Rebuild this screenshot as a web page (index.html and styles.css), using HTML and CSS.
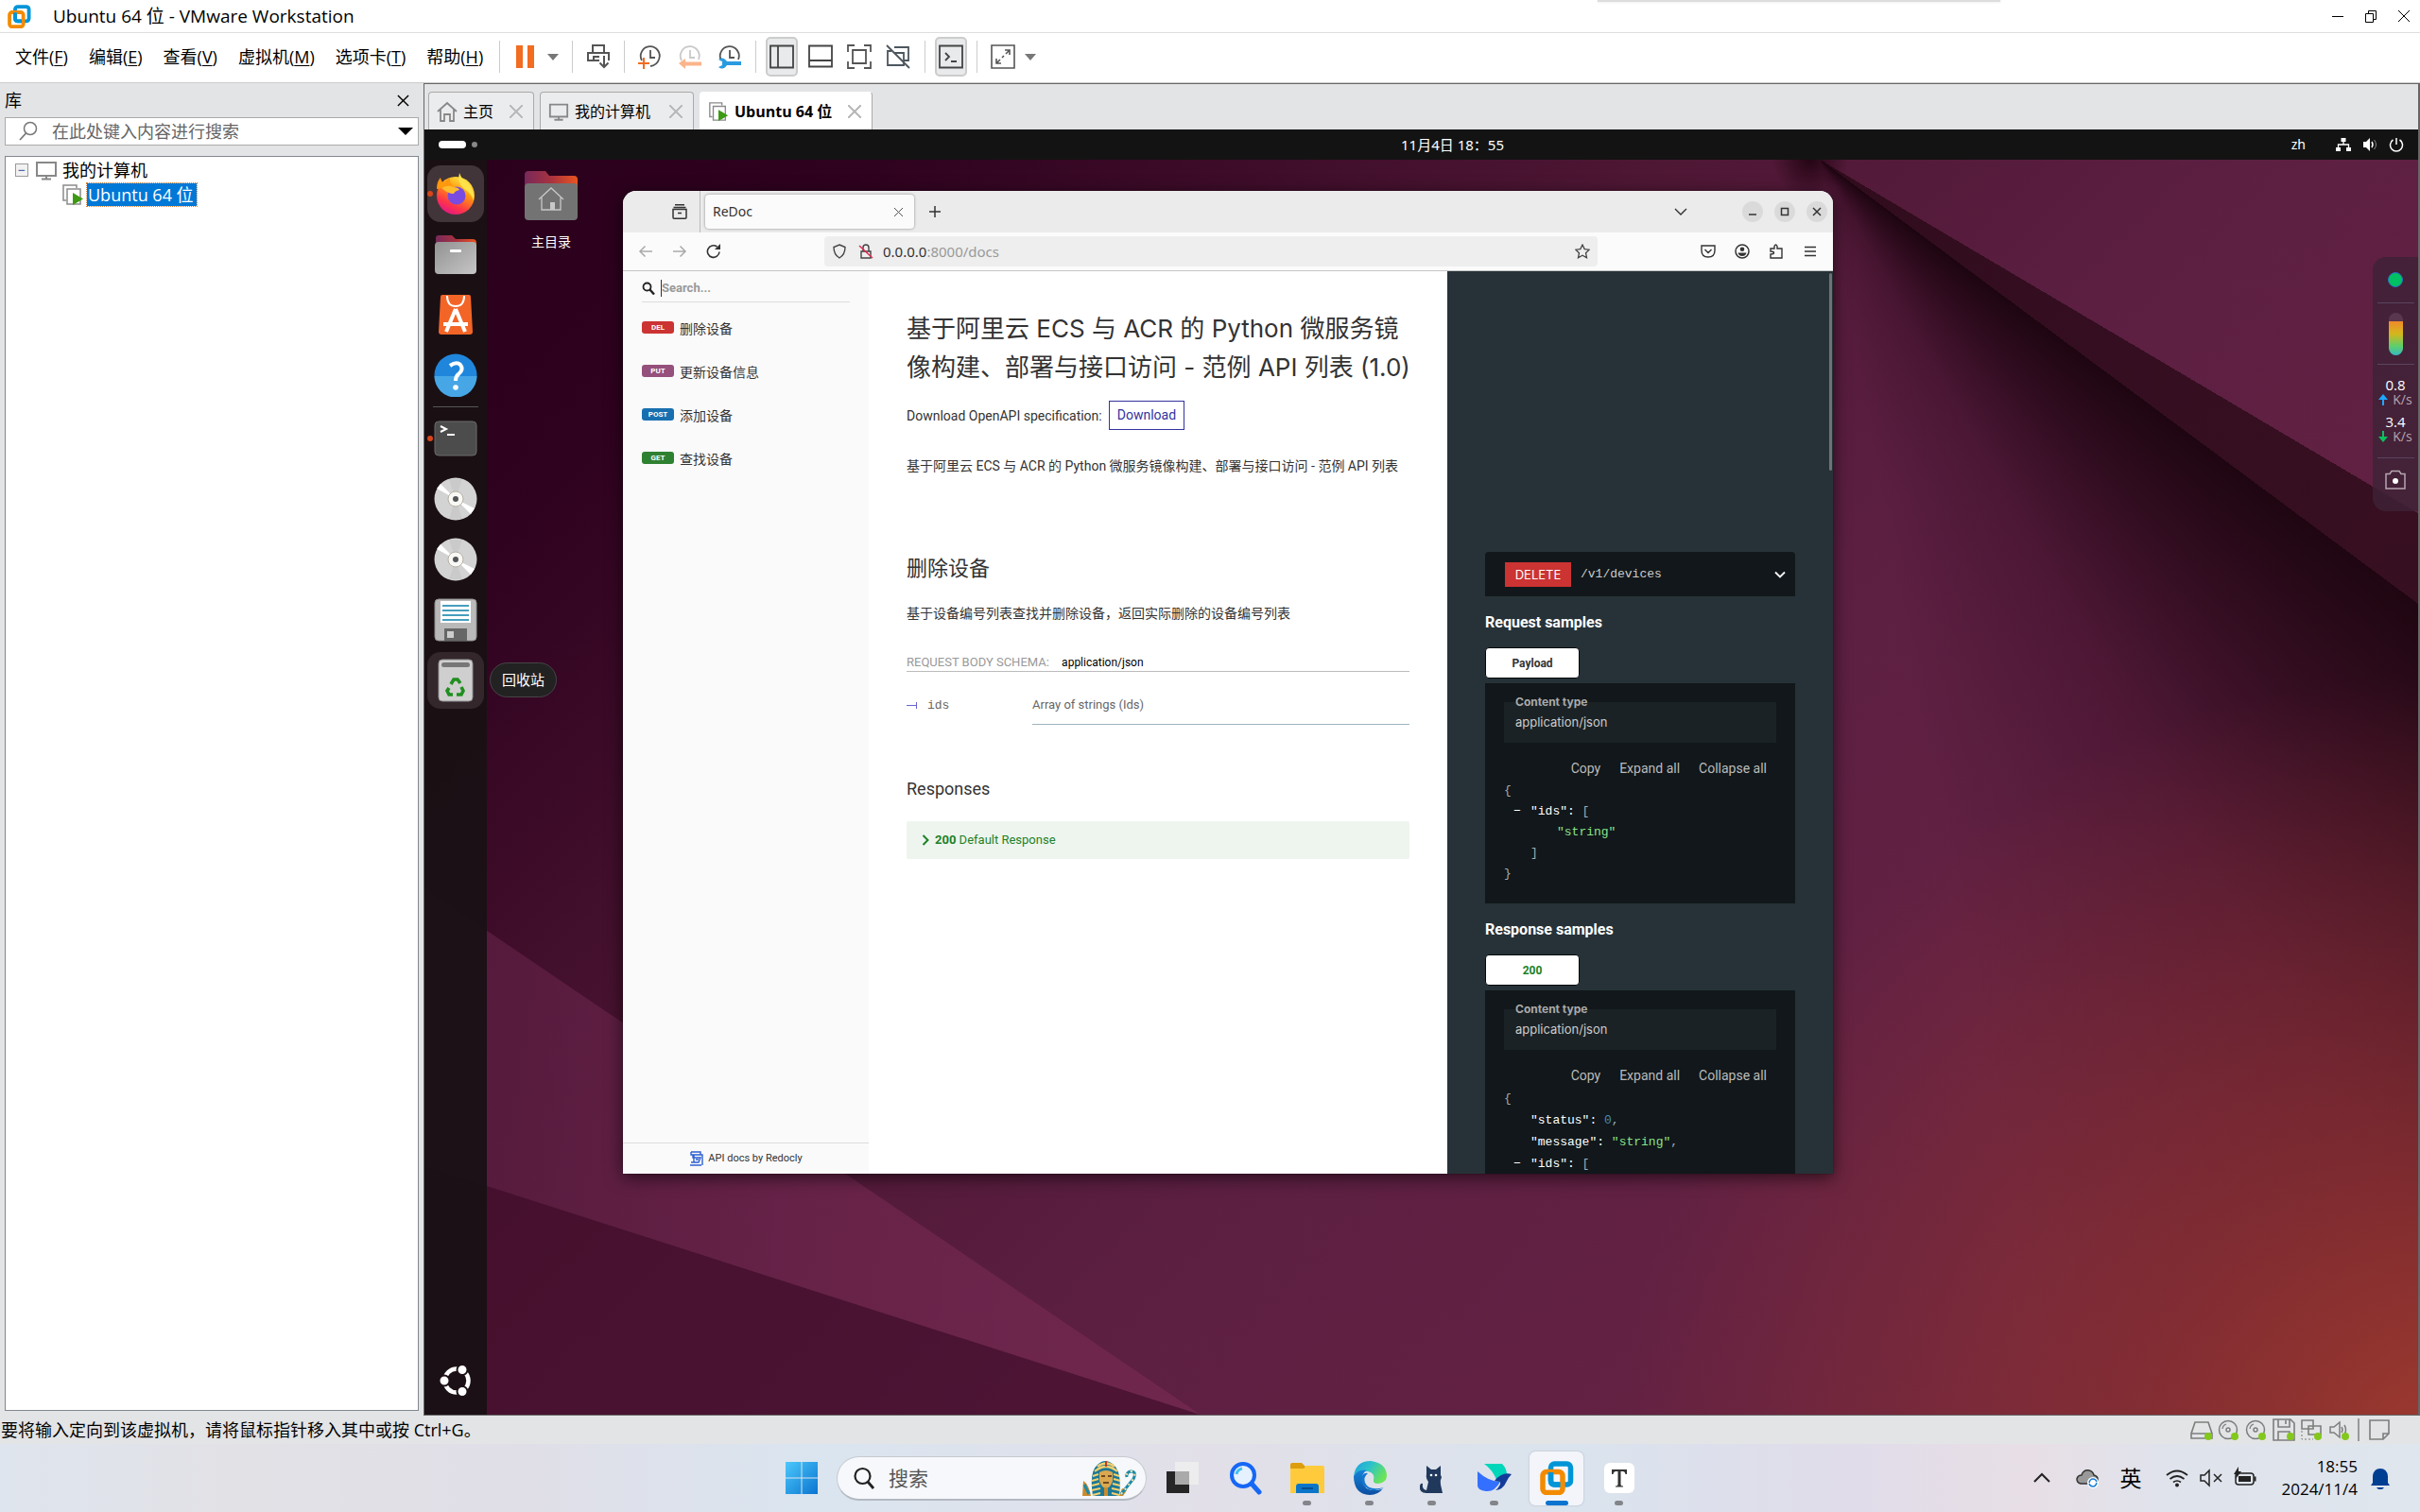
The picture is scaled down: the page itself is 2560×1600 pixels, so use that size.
FILE: index.html
```html
<!DOCTYPE html>
<html lang="zh-CN">
<head>
<meta charset="utf-8">
<title>Ubuntu 64 位 - VMware Workstation</title>
<link rel="stylesheet" href="styles.css">
</head>
<body>
<svg class="defs" aria-hidden="true">
  <defs>
    <linearGradient id="folderBack" x1="0" x2="1"><stop offset="0" stop-color="#77295a"/><stop offset=".5" stop-color="#a8323f"/><stop offset="1" stop-color="#e95420"/></linearGradient>
    <linearGradient id="metal" x1="0" y1="0" x2="1" y2="1"><stop offset="0" stop-color="#929292"/><stop offset="1" stop-color="#c6c6c6"/></linearGradient>
    <linearGradient id="win" x1="0" y1="0" x2="1" y2="1"><stop offset="0" stop-color="#4cc8fb"/><stop offset="1" stop-color="#0a74d0"/></linearGradient>
    <linearGradient id="fox" x1=".8" y1="0" x2=".3" y2="1"><stop offset="0" stop-color="#fff44f"/><stop offset=".4" stop-color="#ff980e"/><stop offset=".75" stop-color="#ff3647"/><stop offset="1" stop-color="#e31587"/></linearGradient>
    <linearGradient id="edgeA" x1="0" y1="0" x2="1" y2=".5"><stop offset="0" stop-color="#1b9de2"/><stop offset=".5" stop-color="#2fc3c8"/><stop offset="1" stop-color="#6be35a"/></linearGradient>
    <linearGradient id="edgeB" x1="0" y1="0" x2="0" y2="1"><stop offset="0" stop-color="#1683d8"/><stop offset="1" stop-color="#0b4ea2"/></linearGradient>
    <linearGradient id="light"><stop offset="0" stop-color="#561b3e"/><stop offset=".5" stop-color="#6b244b"/><stop offset="1" stop-color="#73284f"/></linearGradient>
    <symbol id="vm" viewBox="0 0 36 36">
      <rect x="11.500" y="3" width="21" height="22" rx="4" fill="none" stroke="#0095d7" stroke-width="5.500"/>
      <rect x="3" y="11.500" width="21" height="22" rx="4" fill="none" stroke="#f38b00" stroke-width="5.500"/>
      <path d="M11.500 12v9q0 4 4 4h6" fill="none" stroke="#0095d7" stroke-width="5.500"/>
    </symbol>
    <symbol id="monitor" viewBox="0 0 24 24"><path d="M2 4h20v14H2zM12 18v3M7 21.500h10" fill="none" stroke="#888" stroke-width="2"/></symbol>
    <symbol id="running" viewBox="0 0 24 24">
      <path d="M5 18H2V2h14v3" fill="none" stroke="#8b8b8b" stroke-width="1.500"/><path d="M6 6h14v16H6z" fill="#fff" stroke="#8b8b8b" stroke-width="1.500"/>
      <path d="M12 10l11 6.500L12 23z" fill="#3d9a12"/>
    </symbol>
    <symbol id="disc" viewBox="0 0 46 46">
      <circle cx="23" cy="23" r="22.500" fill="#d3d3d3"/><path d="M23 23L3 12 7 7zM23 23l20 10-4 6z" fill="#fff"/>
      <path d="M23 23L16 2h14zM23 23l-7 21h14z" fill="#c4c4c4" opacity=".6"/>
      <circle cx="23" cy="23" r="8" fill="#f8f8f6" stroke="#b7b1a2"/><circle cx="23" cy="23" r="3" fill="#555"/>
    </symbol>
    <symbol id="clock" viewBox="0 0 26 26"><path d="M4 17A10 10 0 1 1 22 16M13 6v8h5" fill="none" stroke="currentColor" stroke-width="1.800"/></symbol>
    <symbol id="cd" viewBox="0 0 24 24"><circle cx="11" cy="12" r="9.500" fill="none" stroke="#7d7d7d" stroke-width="1.500"/><circle cx="11" cy="12" r="2" fill="none" stroke="#7d7d7d" stroke-width="1.500"/><path d="M5 11a6 6 0 0 1 4-5" fill="none" stroke="#7d7d7d" stroke-width="1.300"/><circle cx="18" cy="19" r="4" fill="#83c81c"/></symbol>
    <symbol id="chev" viewBox="0 0 16 16"><path d="M3 5.500l5 5 5-5" fill="none" stroke="currentColor" stroke-width="1.800"/></symbol>
  </defs>
</svg>

<header class="titlebar">
  <svg class="i25"><use href="#vm"/></svg>
  <h1 class="apptitle">Ubuntu 64 位 - VMware Workstation</h1>
  <div class="wincontrols">
    <button aria-label="最小化"><svg viewBox="0 0 14 14"><path d="M1 7.500h12" stroke="#000"/></svg></button>
    <button aria-label="还原"><svg viewBox="0 0 14 14"><path d="M1.500 4.500h8v9h-8zM4.500 4.500v-3h8v9h-3" fill="none" stroke="#000"/></svg></button>
    <button aria-label="关闭"><svg viewBox="0 0 14 14"><path d="M1 1l12 12M13 1L1 13" stroke="#000"/></svg></button>
  </div>
  <div class="peek"></div>
</header>

<nav class="menubar">
  <div class="menus">
    <button>文件(<u>F</u>)</button><button>编辑(<u>E</u>)</button><button>查看(<u>V</u>)</button><button>虚拟机(<u>M</u>)</button><button>选项卡(<u>T</u>)</button><button>帮助(<u>H</u>)</button>
  </div>
  <div class="group"><button aria-label="挂起"><svg viewBox="0 0 26 26"><path d="M3 1h7v24H3zM15 1h7v24h-7z" fill="#f26c21"/></svg></button><button class="drop" aria-label="电源选项"></button></div>
  <div class="group"><button aria-label="发送"><svg viewBox="0 0 26 26"><path d="M7 9V1h12v8M14 17H2V9h22v8M8 17v-4h6M19 12v12M14.500 19.500L19 24l4.500-4.500" fill="none" stroke="#555" stroke-width="2"/></svg></button></div>
  <div class="group clocks">
    <button aria-label="拍摄快照"><svg viewBox="0 0 26 26" color="#555"><use href="#clock"/><path d="M22 16q-2 6-9 7" fill="none" stroke="#555" stroke-width="1.800"/><path d="M6 14v12M0 20h12" stroke="#f26c21" stroke-width="2"/></svg></button>
    <button aria-label="恢复快照"><svg viewBox="0 0 26 26" color="#c9c9c9"><use href="#clock"/><path d="M1 20l7-5v3.500h17v4H8V26z" fill="#fbb48c"/></svg></button>
    <button aria-label="管理快照"><svg viewBox="0 0 26 26" color="#555"><use href="#clock"/><path d="M1 16l4 2v4l-4 2q5 4 9-2h15v-4H10q-4-6-9-2z" fill="#2a9be0"/></svg></button>
  </div>
  <div class="group views">
    <button class="on" aria-label="库"><svg viewBox="0 0 26 26"><path d="M1 1.500h24v23H1zM9 2v22" fill="none" stroke="#444" stroke-width="1.800"/></svg></button>
    <button aria-label="缩略图栏"><svg viewBox="0 0 26 26"><path d="M1 1.500h24v22H1zM1 17h24" fill="none" stroke="#444" stroke-width="1.800"/></svg></button>
    <button aria-label="拉伸客户机"><svg viewBox="0 0 26 26"><path d="M1 8V1h7M18 1h7v7M25 18v7h-7M8 25H1v-7M6 6h14v14H6z" fill="none" stroke="#555" stroke-width="1.800"/></svg></button>
    <button aria-label="Unity"><svg viewBox="0 0 26 26"><path d="M9 3h15v14h-5M19 17v5H2V7h4M9 9h10v8M1 1l24 24" fill="none" stroke="#4d565e" stroke-width="1.800"/></svg></button>
  </div>
  <div class="group"><button class="on" aria-label="控制台视图"><svg viewBox="0 0 26 26"><path d="M1 1.500h24v23H1zM7 9l4 4-4 4M13 18h6" fill="none" stroke="#444" stroke-width="1.800"/></svg></button></div>
  <div class="group"><button aria-label="全屏"><svg viewBox="0 0 26 26"><path d="M1 1h24v24H1zM15 6h5v5M6 15v5h5M20 6l-4 4M14 12l-2 2M10 16l-4 4" fill="none" stroke="#555" stroke-width="1.600"/></svg></button><button class="drop" aria-label="全屏选项"></button></div>
</nav>

<main class="body">
  <aside class="library">
    <div class="libhead"><span>库</span><button aria-label="关闭库"><svg viewBox="0 0 14 14"><path d="M1 1l12 12M13 1L1 13" stroke="#000" stroke-width="1.500"/></svg></button></div>
    <div class="libsearch">
      <svg viewBox="0 0 22 22"><circle cx="13" cy="8" r="6.500" fill="none" stroke="#777" stroke-width="1.500"/><path d="M8.500 13L2 20" stroke="#777" stroke-width="1.800"/></svg>
      <input type="text" aria-label="搜索库" placeholder="在此处键入内容进行搜索">
      <button class="drop black" aria-label="搜索选项"></button>
    </div>
    <ul class="tree">
      <li><button class="expander" aria-label="折叠">−</button><svg class="i24"><use href="#monitor"/></svg><span>我的计算机</span></li>
      <li class="child"><svg class="i24"><use href="#running"/></svg><span class="sel">Ubuntu 64 位</span></li>
    </ul>
  </aside>

  <section class="console">
    <div class="vmtabs">
      <div class="vmtab"><svg viewBox="0 0 22 22"><path d="M1 11L11 2l10 9M4 9v12h4v-7h6v7h4V9" fill="none" stroke="#888" stroke-width="1.800"/></svg><button>主页</button><button class="x" aria-label="关闭"></button></div>
      <div class="vmtab t2"><svg><use href="#monitor"/></svg><button>我的计算机</button><button class="x" aria-label="关闭"></button></div>
      <div class="vmtab active"><svg><use href="#running"/></svg><button>Ubuntu 64 位</button><button class="x" aria-label="关闭"></button></div>
    </div>

    <div class="guest">
      <div class="gnomebar">
        <div class="spaces"><i></i><b></b></div>
        <time>11月4日 18：55</time>
        <div class="indicators"><span>zh</span>
          <svg viewBox="0 0 16 16"><path d="M5.500 1h5v4h-5zM0 11h5v4H0zM11 11h5v4h-5z" fill="#fff"/><path d="M8 5v3M2.500 11V8h11v3" fill="none" stroke="#fff" stroke-width="1.300"/></svg>
          <svg viewBox="0 0 16 16"><path d="M1 5h3l4-4v14l-4-4H1z" fill="#fff"/><path d="M10 5q2 3 0 6" fill="none" stroke="#fff" stroke-width="1.500"/><path d="M12.500 3q4 5 0 10" fill="none" stroke="#888"/></svg>
          <svg viewBox="0 0 16 16"><path d="M4.500 3A6.500 6.500 0 1 0 11.500 3M8 1v7" fill="none" stroke="#fff" stroke-width="1.500"/></svg>
        </div>
      </div>

      <div class="desktop">
        <svg class="facets" viewBox="0 0 2109 1328" preserveAspectRatio="none">
          <path d="M0 1065L66 1086 821 1328H0z" fill="#430d2c" opacity=".6"/>
          <path d="M0 771L821 1328 66 1086 0 1065z" fill="url(#light)" opacity=".85"/>
        </svg>
        <nav class="dock">
          <button class="run focus" aria-label="Firefox"><svg viewBox="0 0 46 46"><circle cx="23" cy="25" r="20" fill="url(#fox)"/><path d="M27 1q3 8 9 11 8 8 6 18-3-8-10-12-8-7-5-17z" fill="#ffe14a"/><path d="M3 18q0-8 4-12 1 5 4 6 2-4 6-6-1 5 3 9z" fill="#ff980e"/><circle cx="24" cy="25" r="9.500" fill="#7a4be0"/><path d="M8 17q8-4 12-1 6 0 7 3-5 1-6 4-6 0-13-6z" fill="#ffbd2e"/></svg></button>
          <button aria-label="文件"><svg viewBox="0 0 46 46"><path d="M2 6q0-3 3-3h14l4 4h18q4 0 4 4v8H2z" fill="url(#folderBack)"/><rect x="1" y="10" width="44" height="34" rx="4" fill="url(#metal)"/><rect x="17" y="18" width="12" height="3" rx="1" fill="#fff"/></svg></button>
          <button aria-label="软件"><svg viewBox="0 0 46 46"><path d="M9 2h28q2 0 2 2l2 37q0 3-3 3H8q-3 0-3-3L7 4q0-2 2-2z" fill="#f36527"/><path d="M14 3q0 11 9 11t9-11" fill="none" stroke="#fff" stroke-width="2"/><path d="M23 17L13 41M23 17l10 24M10 33h26" fill="none" stroke="#fff" stroke-width="4"/></svg></button>
          <button aria-label="帮助"><svg viewBox="0 0 46 46"><circle cx="23" cy="23" r="22.500" fill="#1f86dc"/><path d="M.5 24h45a22.500 22.500 0 0 1-45 0z" fill="#47a6e6"/><path d="M17 13q7-5 11-1 4 5-2 10-3 2-3 7" fill="none" stroke="#fff" stroke-width="4"/><circle cx="23" cy="36" r="2.800" fill="#fff"/></svg></button>
          <hr>
          <button class="run" aria-label="终端"><svg viewBox="0 0 46 46"><rect x="1" y="5" width="44" height="36" rx="4" fill="#4c4c4c" stroke="#6a6a6a"/><path d="M7 10l6 3-6 3M14 19h8" fill="none" stroke="#fff" stroke-width="2"/></svg></button>
          <button aria-label="光盘 1"><svg><use href="#disc"/></svg></button>
          <button aria-label="光盘 2"><svg><use href="#disc"/></svg></button>
          <button aria-label="软盘"><svg viewBox="0 0 46 46"><rect x="1" y="1" width="44" height="44" rx="4" fill="#b9b9b9" stroke="#8e8e8e"/><path d="M7 3h32v23H7z" fill="#fff"/><path d="M9 8h28M9 13h28M9 18h28M9 23h28" stroke="#0a7fa8" stroke-width="1.500"/><path d="M11 32h24v13H11z" fill="#666"/><path d="M14 35h7v7h-7z" fill="#ccc"/></svg></button>
          <button class="hover" aria-label="回收站"><svg viewBox="0 0 46 46"><rect x="5" y="1" width="36" height="44" rx="4" fill="#cfcfcf" stroke="#8e8e8e"/><rect x="8" y="4" width="30" height="5" rx="2.500" fill="#777"/><path d="M18 27l3-5h4l3 4M29 30l2 4-2 4h-5M20 38h-4l-2-4 2-3" fill="none" stroke="#1f8f1f" stroke-width="3.600"/></svg></button>
          <button class="apps" aria-label="显示应用"><svg viewBox="0 0 36 36"><circle cx="19" cy="18" r="12.500" fill="none" stroke="#fff" stroke-width="4.500"/><g fill="#fff" stroke="#1d1117" stroke-width="2"><circle cx="6" cy="18" r="5.500"/><circle cx="25" cy="6.500" r="5.500"/><circle cx="25" cy="29.500" r="5.500"/></g></svg></button>
        </nav>
        <div class="tooltip">回收站</div>
        <div class="homefolder"><svg viewBox="0 0 56 52"><path d="M0 4q0-4 4-4h18l4 5h26q4 0 4 4v10H0z" fill="url(#folderBack)"/><rect y="13" width="56" height="39" rx="4" fill="#737373"/><path d="M15 30l13-12 13 12M18 28v13h20V28" fill="none" stroke="#c8c8c8" stroke-width="1.300"/><path d="M27 33h5v8h-5z" fill="#c8c8c8"/></svg><span>主目录</span></div>

        <article class="browser">
          <div class="tabstrip">
            <button class="recent" aria-label="最近的标签页"><svg viewBox="0 0 16 16"><path d="M3 .8h10M1.500 3.500h13M1 5.500h14v8.500q0 1.200-1.200 1.200H2.200Q1 15.200 1 14zM6 9.500h4" fill="none" stroke="#333" stroke-width="1.500"/></svg></button>
            <div class="ftab"><span>ReDoc</span><button class="x dark" aria-label="关闭标签页"></button></div>
            <button class="plus" aria-label="新标签页"><svg viewBox="0 0 16 16"><path d="M8 2v12M2 8h12" stroke="#333" stroke-width="1.500"/></svg></button>
            <button class="listtabs" aria-label="列出标签页"><svg viewBox="0 0 16 16"><path d="M2 5l6 6 6-6" fill="none" stroke="#333" stroke-width="1.400"/></svg></button>
            <div class="fwin">
              <button aria-label="最小化"><svg viewBox="0 0 16 16"><path d="M4 11h8" stroke="#333" stroke-width="1.500"/></svg></button>
              <button aria-label="最大化"><svg viewBox="0 0 16 16"><path d="M4.500 4.500h7v7h-7z" fill="none" stroke="#333" stroke-width="1.500"/></svg></button>
              <button aria-label="关闭"><svg viewBox="0 0 16 16"><path d="M4 4l8 8M12 4l-8 8" stroke="#333" stroke-width="1.500"/></svg></button>
            </div>
          </div>
          <div class="navbar">
            <div class="hist">
              <button aria-label="后退"><svg viewBox="0 0 16 16"><path d="M15 8H2M7.500 2.500L2 8l5.500 5.500" fill="none" stroke="#aaa" stroke-width="1.500"/></svg></button>
              <button aria-label="前进"><svg viewBox="0 0 16 16"><path d="M1 8h13M8.500 2.500L14 8l-5.500 5.500" fill="none" stroke="#aaa" stroke-width="1.500"/></svg></button>
              <button aria-label="刷新"><svg viewBox="0 0 16 16"><path d="M14 8.500A6.300 6.300 0 1 1 11.500 3" fill="none" stroke="#333" stroke-width="1.600"/><path d="M15 0v6H9z" fill="#333"/></svg></button>
            </div>
            <label class="urlbar">
              <svg viewBox="0 0 16 16"><path d="M8 1l6 2.500q0 8-6 11.500-6-3.500-6-11.500z" fill="none" stroke="#444" stroke-width="1.400"/></svg>
              <svg viewBox="0 0 16 16"><path d="M3 8h10v7H3zM5 8V4q0-3 3-3t3 3v4" fill="none" stroke="#444" stroke-width="1.400"/><path d="M1 2l14 13" stroke="#e22850" stroke-width="1.500"/></svg>
              <span class="url">0.0.0.0<em>:8000/docs</em></span>
              <svg viewBox="0 0 16 16"><path d="M8 1l2.200 4.600 5 .6-3.700 3.500 1 5L8 12.300l-4.500 2.400 1-5L.8 6.200l5-.6z" fill="none" stroke="#444" stroke-width="1.300"/></svg>
            </label>
            <div class="ext">
              <button aria-label="Pocket"><svg viewBox="0 0 16 16"><path d="M1 2h14v5q0 7-7 7T1 7zM4.500 6L8 9.500 11.500 6" fill="none" stroke="#333" stroke-width="1.400"/></svg></button>
              <button aria-label="账户"><svg viewBox="0 0 16 16"><circle cx="8" cy="8" r="7" fill="none" stroke="#333" stroke-width="1.500"/><circle cx="8" cy="5.700" r="2.300" fill="#333"/><path d="M3.500 9.500h9q-1 3.500-4.500 3.500T3.500 9.500z" fill="#333"/></svg></button>
              <button aria-label="扩展"><svg viewBox="0 0 16 16"><path d="M2 5h4V2.500q1.500-3 3 0V5h5v10H2v-4q3.500 0 3.500-1.500T2 8z" fill="none" stroke="#333" stroke-width="1.400"/></svg></button>
              <button aria-label="菜单"><svg viewBox="0 0 16 16"><path d="M2 3.500h12M2 8h12M2 12.500h12" stroke="#333" stroke-width="1.400"/></svg></button>
            </div>
          </div>

          <div class="redoc">
            <aside class="side">
              <label class="rsearch"><svg viewBox="0 0 14 14"><circle cx="5.500" cy="5.500" r="4" fill="none" stroke="#222" stroke-width="1.800"/><path d="M8.500 8.500l4.500 5" stroke="#222" stroke-width="2.400"/></svg><input type="text" aria-label="Search" placeholder="Search..."></label>
              <ul>
                <li><a href="#del"><b class="del">DEL</b>删除设备</a></li>
                <li><a href="#put"><b class="put">PUT</b>更新设备信息</a></li>
                <li><a href="#post"><b class="post">POST</b>添加设备</a></li>
                <li><a href="#get"><b class="get">GET</b>查找设备</a></li>
              </ul>
              <a class="credit" href="#redocly"><svg viewBox="0 0 16 16"><path d="M2 1h10v3H4v3h8l-2 5H2M2 1v3h2M5 4v8M7 9h3M1 15h12M12 4h2v11" fill="none" stroke="#2c5fd0" stroke-width="1.400"/></svg>API docs by Redocly</a>
            </aside>
            <section class="mid">
              <h1>基于阿里云 ECS 与 ACR 的 Python 微服务镜像构建、部署与接口访问 - 范例 API 列表 (1.0)</h1>
              <p class="spec">Download OpenAPI specification: <a href="#download">Download</a></p>
              <p class="intro">基于阿里云 ECS 与 ACR 的 Python 微服务镜像构建、部署与接口访问 - 范例 API 列表</p>
              <h2 id="del">删除设备</h2>
              <p class="desc">基于设备编号列表查找并删除设备，返回实际删除的设备编号列表</p>
              <h5>REQUEST BODY SCHEMA: <span>application/json</span></h5>
              <table><tbody><tr><td class="name"><i></i>ids</td><td class="type">Array of strings (Ids)</td></tr></tbody></table>
              <h3>Responses</h3>
              <button class="resp"><svg viewBox="0 0 8 12"><path d="M1.500 1l5 5-5 5" fill="none" stroke="#1d8127" stroke-width="2"/></svg><span><b>200</b> Default Response</span></button>
            </section>
            <section class="right">
              <button class="endpoint"><b>DELETE</b><code>/v1/devices</code><svg color="#fff"><use href="#chev"/></svg></button>
              <h3>Request samples</h3>
              <button class="rtab">Payload</button>
              <div class="sample">
                <div class="ctype"><span>Content type</span>application/json</div>
                <div class="acts"><button>Copy</button><button>Expand all</button><button>Collapse all</button></div>
                <div class="code">
                  <div>{</div>
                  <div class="l1"><button aria-label="折叠 ids">−</button><b>"ids":</b> [</div>
                  <div class="l2"><s>"string"</s></div>
                  <div class="l1">]</div>
                  <div>}</div>
                </div>
              </div>
              <h3>Response samples</h3>
              <button class="rtab ok">200</button>
              <div class="sample">
                <div class="ctype"><span>Content type</span>application/json</div>
                <div class="acts"><button>Copy</button><button>Expand all</button><button>Collapse all</button></div>
                <div class="code wide">
                  <div>{</div>
                  <div class="l1"><b>"status":</b> <i>0</i>,</div>
                  <div class="l1"><b>"message":</b> <s>"string"</s>,</div>
                  <div class="l1"><button aria-label="折叠 ids">−</button><b>"ids":</b> [</div>
                </div>
              </div>
            </section>
            <div class="thumb"></div>
          </div>
        </article>
      </div>
    </div>
  </section>
</main>

<footer class="status">
  <span>要将输入定向到该虚拟机，请将鼠标指针移入其中或按 Ctrl+G。</span>
  <div class="devices">
    <svg viewBox="0 0 24 24"><path d="M5 4h14l4 12v5H1v-5zM1 16h21" fill="none" stroke="#7d7d7d" stroke-width="1.600"/><circle cx="19" cy="19" r="4" fill="#83c81c"/></svg>
    <svg><use href="#cd"/></svg>
    <svg><use href="#cd"/></svg>
    <svg viewBox="0 0 24 24"><path d="M1 1h18l4 4v18H1zM6 1v8h12V1M6 23v-9h12v9M14 2v4" fill="none" stroke="#7d7d7d" stroke-width="1.600"/><circle cx="19" cy="19" r="4" fill="#83c81c"/></svg>
    <svg viewBox="0 0 24 24"><path d="M2 2h12v9H2zM9 8h13v9H9z" fill="none" stroke="#7d7d7d" stroke-width="1.600"/><path d="M2 13v9h12" fill="none" stroke="#7d7d7d" stroke-dasharray="2 2"/><circle cx="19" cy="19" r="4" fill="#83c81c"/></svg>
    <svg viewBox="0 0 24 24"><path d="M3 9h4l6-5v16l-6-5H3zM15 9q2 3 0 6M18 7q3 5 0 10" fill="none" stroke="#7d7d7d" stroke-width="1.500"/><circle cx="19" cy="19" r="4" fill="#83c81c"/></svg>
    <svg class="note" viewBox="0 0 24 24"><path d="M2 2h20v14l-6 6H2zM22 16h-6v6" fill="none" stroke="#7d7d7d" stroke-width="1.600"/></svg>
  </div>
</footer>

<footer class="taskbar">
  <div class="apps">
    <button aria-label="开始"><svg viewBox="0 0 36 36"><path d="M1 1h16.500v16.500H1zM18.500 1H35v16.500H18.500zM1 18.500h16.500V35H1zM18.500 18.500H35V35H18.500z" fill="url(#win)"/></svg></button>
    <label class="tsearch"><svg viewBox="0 0 24 24"><circle cx="10.500" cy="10" r="8" fill="none" stroke="#222" stroke-width="2.200"/><path d="M16 16l6 7" stroke="#222" stroke-width="2.800"/></svg><input type="text" aria-label="搜索" placeholder="搜索">
      <svg class="pharaoh" viewBox="0 0 60 38"><path d="M12 38Q8 12 17 5q8-8 17 0 9 7 6 33z" fill="#1c7896"/><path d="M17 7q9-7 18 0M14 12q12-10 24 0M12 17l6-2M11 22l7-2M11 27l8-2M11 32l9-2M12 37l8-2M40 17l-6-2M41 22l-7-2M41 27l-8-2M41 32l-9-2M40 37l-8-2" fill="none" stroke="#f4d06f" stroke-width="2.200"/><path d="M19 13q7-4 14 0v9q-2 7-7 8-5-1-7-8z" fill="#dba850"/><path d="M21 17h4M28 17h4M23 24h6" stroke="#4b2b12" stroke-width="1.300"/><path d="M24 29h4v9h-4z" fill="#c98b2d"/><path d="M26 1v6" stroke="#c23b22" stroke-width="2"/><path d="M2 22q6 4 8 16H1zM40 38l3-8 5 2-4 6z" fill="#c98b2d"/><path d="M3 26l5 10M42 36l13-16q4-8-3-8-5 1-4 6" fill="none" stroke="#1e8aa6" stroke-width="3"/><path d="M42 36l13-16q4-8-3-8-5 1-4 6" fill="none" stroke="#f4e3b0" stroke-width="2" stroke-dasharray="2 4"/></svg></label>
    <button aria-label="任务视图"><svg viewBox="0 0 36 36"><path d="M1 11h24v23H1z" fill="#262626"/><path d="M10 1h25v24H10z" fill="#eee" opacity=".85"/><path d="M10 11h15v14H10z" fill="#aaa"/></svg></button>
    <button aria-label="查找"><svg viewBox="0 0 36 36"><circle cx="16" cy="15" r="12" fill="#e6f1ff" stroke="#1667f5" stroke-width="4"/><path d="M25 24l8 9" stroke="#1667f5" stroke-width="5" stroke-linecap="round"/><path d="M9 14q1-5 6-6" stroke="#3fc0f5" stroke-width="3" fill="none"/></svg></button>
    <button class="open" aria-label="文件资源管理器"><svg viewBox="0 0 36 36"><path d="M0 4q0-2 2-2h10l4 4v4H0z" fill="#dd9d0c"/><path d="M0 8h14l3-3h17q2 0 2 2v27H0z" fill="#ffcb3c"/><path d="M6 34v-7q0-3 3-3h18q3 0 3 3v7z" fill="#0b76c9"/><path d="M12 29h12" stroke="#084f8e" stroke-width="2"/></svg></button>
    <button class="open" aria-label="Edge"><svg viewBox="0 0 36 36"><path d="M1 16Q3 0 19 0q16 2 17 15 0 8-9 9-6 0-5-4 2-7-6-9Q6 9 1 16z" fill="url(#edgeA)"/><path d="M1 16q5-8 14-6-6 3-5 11 2 10 13 10 6 0 9-2-5 7-14 7Q1 35 1 16z" fill="url(#edgeB)"/><path d="M16 13q-5 4-3 10 4 9 20 5-9 5-16 2-10-6-7-14 2-4 6-3z" fill="#1178cf"/></svg></button>
    <button class="open" aria-label="Clash"><svg viewBox="0 0 36 36"><path d="M12 5l5 4h5l5-4v10l1 2q-2 4-1 8l2 9H12Q4 34 5 26q1-3 3-2-1 6 4 7l2-9q-3-4-2-8z" fill="#20385c"/><circle cx="17" cy="15" r="1.300" fill="#fff"/><circle cx="22" cy="15" r="1.300" fill="#fff"/></svg></button>
    <button class="open" aria-label="飞书"><svg viewBox="0 0 36 36"><path d="M7 3h19q5 5 5 12l-10 7Q16 9 7 3z" fill="#00d6b9"/><path d="M0 11q12 11 24 11-6 11-15 10-9-1-9-6z" fill="#3370ff"/><path d="M18 21q8-10 18-7-4 4-6 9-3 7-11 8 6-5 5-9z" fill="#133c9a"/></svg></button>
    <button class="open current" aria-label="VMware Workstation"><svg><use href="#vm"/></svg></button>
    <button class="open" aria-label="Typora"><svg viewBox="0 0 36 36"><rect x="2" y="2" width="32" height="32" rx="6" fill="#fff"/><path d="M10 9h16v5h-1.500q-.5-3-3-3H19.500v14q0 1.500 2.500 1.500v1h-8v-1q2.500 0 2.500-1.500V11h-2q-2.500 0-3 3H10z" fill="#333"/></svg></button>
  </div>
  <div class="tray">
    <svg viewBox="0 0 24 24"><path d="M4 16l8-8 8 8" fill="none" stroke="#222" stroke-width="2"/></svg>
    <svg viewBox="0 0 24 24"><path d="M5 18q-4-1-4-5 1-4 5-4 2-6 8-5 4 1 5 5 4 1 4 4 0 5-5 5z" fill="#999" stroke="#333" stroke-width="1.500"/><circle cx="18" cy="17" r="6" fill="#fff"/><path d="M14 17q1-4 4-4t4 3M22 17q-1 4-4 4t-4-3" fill="none" stroke="#1a7fd4" stroke-width="1.500"/></svg>
    <span class="ime">英</span>
    <svg class="wifi" viewBox="0 0 24 24"><path d="M1 9q11-9 22 0M4.500 13q7.500-6 15 0M8 16.500q4-3 8 0" fill="none" stroke="#222" stroke-width="1.700"/><circle cx="12" cy="19.500" r="2" fill="#222"/></svg>
    <svg viewBox="0 0 24 24"><path d="M1 9h4l5-5v16l-5-5H1zM15 8l8 8M23 8l-8 8" fill="none" stroke="#222" stroke-width="1.500"/></svg>
    <svg viewBox="0 0 24 24"><rect x="2" y="7" width="19" height="12" rx="3" fill="none" stroke="#222" stroke-width="1.500"/><path d="M5 10h13v6H5zM21.500 10.500h2v5h-2zM5 0L0 8h3l-1 5 6-8H5z" fill="#222"/></svg>
    <div class="clock"><time>18:55</time><time>2024/11/4</time></div>
    <svg viewBox="0 0 24 24"><path d="M4 17V10q1-8 8-8t8 8v7l2 3H2zM8 22h8q-4 5-8 0z" fill="#003e92"/></svg>
  </div>
</footer>

<aside class="widget">
  <i class="dot"></i><hr>
  <div class="gauge"></div><hr>
  <div class="rate"><b>0.8</b><span><svg viewBox="0 0 10 12"><path d="M5 0l5 6H6v6H4V6H0z" fill="#1ea7ff"/></svg>K/s</span></div>
  <div class="rate"><b>3.4</b><span><svg viewBox="0 0 10 12"><path d="M5 12l5-6H6V0H4v6H0z" fill="#0bc05f"/></svg>K/s</span></div><hr>
  <svg class="cam" viewBox="0 0 24 22"><path d="M2 4.500h4l2-3h8l2 3h4V20H2z" fill="none" stroke="#b5a7b0" stroke-width="1.500"/><circle cx="12" cy="12" r="3" fill="#fff"/></svg>
</aside>
</body>
</html>
```

FILE: styles.css
```css
* { box-sizing: border-box; }
body {
  margin: 0; height: 100vh; overflow: hidden; position: relative;
  display: flex; flex-direction: column;
  font: 18px/24px "Open Sans", "Noto Sans CJK SC", sans-serif; color: #000; background: #fff;
}
button { border: 0; padding: 0; background: none; font: inherit; color: inherit; display: flex; align-items: center; justify-content: center; white-space: nowrap; }
input { border: 0; padding: 0; background: none; font: inherit; outline: 0; min-width: 0; }
ul { list-style: none; margin: 0; padding: 0; }
h1, h2, h3, h5, p { margin: 0; font-weight: 400; }
a { color: inherit; text-decoration: none; }
svg { display: block; flex: none; }
.defs { position: absolute; width: 0; height: 0; }
.i25 { width: 25px; height: 25px; }
.i24 { width: 24px; height: 24px; }
.drop::after { content: ""; border: 6px solid transparent; border-top: 7px solid #777; border-bottom: 0; }
.drop.black::after { border-width: 8px; border-top-color: #000; border-bottom: 0; }
.x { width: 14px; height: 14px; background: linear-gradient(45deg, transparent 46%, #bbb 46% 54%, transparent 54%), linear-gradient(-45deg, transparent 46%, #bbb 46% 54%, transparent 54%); }
.x.dark { width: 9px; height: 9px; background: linear-gradient(45deg, transparent 45%, #555 45% 55%, transparent 55%), linear-gradient(-45deg, transparent 45%, #555 45% 55%, transparent 55%); }

/* host window frame */
.titlebar { height: 35px; flex: none; display: flex; align-items: center; padding: 0 10px 0 8px; border-bottom: 1px solid #ddd; position: relative; }
.apptitle { font-size: 19px; margin-left: 23px; flex: 1; }
.wincontrols { display: flex; gap: 21px; }
.wincontrols svg { width: 14px; height: 14px; }
.peek { position: absolute; right: 444px; top: 0; width: 426px; height: 2px; background: #ddd; box-shadow: 0 0 3px #ddd; }
.menubar { height: 53px; flex: none; display: flex; align-items: center; border-bottom: 1px solid #ccc; padding: 0 0 2px 16px; }
.menus { display: flex; gap: 22px; margin-right: 17px; }
.menus u { text-underline-offset: 2px; }
.group { display: flex; align-items: center; height: 34px; border-left: 1px solid #ccc; padding: 0 14px; gap: 10px; }
.group svg { width: 26px; height: 26px; }
.group.clocks { gap: 16px; }
.group.views { gap: 15px; padding: 0 15px 0 10px; }
.group .on { width: 34px; height: 42px; background: #e9eaec; border: 2px solid #ccc; border-radius: 5px; margin: 0 -4px 0 0; }
.group:nth-last-child(2) { padding: 0 14px 0 10px; }

.body { flex: 1; min-height: 0; display: flex; background: #e3e4e6; }
.library { width: 448px; flex: none; padding: 0 5px 5px; display: flex; flex-direction: column; }
.libhead { height: 36px; display: flex; align-items: center; justify-content: space-between; padding-right: 10px; }
.libhead svg { width: 13px; height: 13px; }
.libsearch { height: 30px; border: 1px solid #aaa; background: #fff; display: flex; align-items: center; padding: 0 5px 0 13px; gap: 14px; margin-bottom: 11px; }
.libsearch svg { width: 22px; height: 22px; }
.libsearch input { flex: 1; }
.libsearch input::placeholder { color: #666; opacity: 1; }
.tree { flex: 1; background: #fff; border: 1px solid #828790; padding: 1px 0 0 10px; }
.tree li { display: flex; align-items: center; height: 26px; }
.expander { width: 14px; height: 14px; border: 1px solid #999; background: #f2f2f2; font-size: 14px; line-height: 10px; color: #2b4a9b; margin-right: 7px; }
.tree li span { margin-left: 5px; }
.tree .child { padding-left: 49px; }
.tree .child span { margin-left: 3px; }
.tree .sel { background: #0078d7; color: #fff; outline: 1px dotted #e08030; padding: 0 3px 0 1px; }

.console { flex: 1; min-width: 0; display: flex; flex-direction: column; border: 1px solid #666; border-width: 1px 2px 1px 1px; }
.vmtabs { height: 48px; flex: none; display: flex; align-items: flex-end; gap: 6px; padding-left: 4px; font-size: 16px; }
.vmtab { height: 40px; min-width: 112px; border: 1px solid #aaa; border-bottom: 0; border-radius: 4px 4px 0 0; background: #ebecee; display: flex; align-items: center; gap: 6px; padding: 0 11px 0 8px; }
.vmtab svg { width: 22px; height: 22px; }
.vmtab .x { margin-left: auto; }
.vmtab.t2 { min-width: 163px; }
.vmtab.active { background: #fff; font-weight: 700; min-width: 183px; border-color: #fff #aaa #fff #fff; }

/* guest desktop */
.guest { flex: 1; min-height: 0; display: flex; flex-direction: column; font-family: "Noto Sans", "Noto Sans CJK SC", sans-serif; }
.gnomebar { height: 32px; flex: none; background: #131313; color: #fff; display: grid; grid-template-columns: 1fr auto 1fr; align-items: center; font-size: 14px; padding: 0 15px; }
.gnomebar time { margin-left: 66px; font-family: "Noto Sans", "Noto Sans CJK TC", sans-serif; font-size: 15px; }
.spaces { display: flex; align-items: center; gap: 6px; }
.spaces i { width: 29px; height: 8px; border-radius: 4px; background: #fff; }
.spaces b { width: 6px; height: 6px; border-radius: 3px; background: #888; }
.indicators { display: flex; justify-content: flex-end; align-items: center; gap: 12px; }
.indicators span { margin-right: 20px; }
.indicators svg { width: 16px; height: 16px; }
.desktop {
  flex: 1; min-height: 0; position: relative; overflow: hidden;
  background:
    radial-gradient(ellipse 42% 62% at 102% 103%, #9e3a2e, rgba(150, 52, 46, .62) 38%, rgba(130, 42, 58, 0)),
    radial-gradient(circle at 69.5% 0, rgba(25, 0, 12, .8) 0, transparent 40px),
    conic-gradient(from 0deg at 70% 0, transparent 120.6deg, rgba(28, 4, 12, .62) 120.6deg 126.6deg, rgba(16, 0, 6, .82) 126.6deg, rgba(20, 0, 10, .62) 137deg, rgba(28, 0, 16, .28) 151deg, transparent 170deg),
    linear-gradient(135deg, #2a001c 0, #2f021f 14%, #4e1734 38%, #5c1f42 56%, #622143 72%, #6c2540 100%);
}
.facets { position: absolute; inset: 0; width: 100%; height: 100%; }
.dock { position: absolute; inset: 0 auto 0 0; width: 66px; background: rgba(25, 17, 20, .95); display: flex; flex-direction: column; align-items: center; gap: 4px; padding: 6px 0; }
.dock button { width: 60px; height: 60px; border-radius: 14px; position: relative; }
.dock svg { width: 46px; height: 46px; }
.dock .focus { background: #423539; }
.dock .hover { background: #33272c; }
.dock .run::before { content: ""; position: absolute; left: 0; top: 27px; width: 6px; height: 6px; border-radius: 3px; background: #d8461a; }
.dock hr { width: 48px; height: 1px; border: 0; background: #555; margin: -1px 0; }
.dock .apps { margin-top: auto; }
.dock .apps svg { width: 36px; height: 36px; }
.tooltip { position: absolute; left: 69px; top: 532px; height: 37px; padding: 0 12px; border: 1px solid #484448; border-radius: 19px; background: #222; color: #fff; font-size: 15px; line-height: 35px; }
.homefolder { position: absolute; left: 94px; top: 12px; width: 80px; display: flex; flex-direction: column; align-items: center; gap: 11px; font-size: 14px; color: #fff; }
.homefolder svg { width: 56px; height: 52px; }

/* browser window */
.browser { position: absolute; left: 210px; top: 33px; width: 1280px; height: 1040px; display: flex; flex-direction: column; border-radius: 14px 14px 0 0; overflow: hidden; background: #fff; box-shadow: 0 4px 18px rgba(0, 0, 0, .6), 0 0 1px #000; font-size: 14px; color: #333; }
.tabstrip { height: 44px; flex: none; background: #ebebeb; display: flex; align-items: center; padding-right: 6px; }
.tabstrip svg, .navbar svg { width: 16px; height: 16px; }
.recent { width: 82px; height: 44px; border-right: 1px solid #bbb; padding-left: 38px; }
.ftab { width: 221px; height: 36px; margin-left: 5px; border-radius: 4px; background: #fbfbfb; box-shadow: 0 0 3px #888; display: flex; align-items: center; justify-content: space-between; padding: 0 12px 0 8px; }
.plus { margin-left: 14px; }
.listtabs { margin-left: auto; margin-right: 57px; }
.fwin { display: flex; gap: 12px; }
.fwin button { width: 22px; height: 22px; border-radius: 11px; background: #dadada; }
.navbar { height: 41px; flex: none; background: #fbfbfb; border-bottom: 1px solid #c5c5c5; display: flex; align-items: center; padding: 0 16px; }
.hist, .ext { display: flex; gap: 20px; }
.urlbar { flex: 1; margin: 0 109px 0 109px; height: 32px; border-radius: 4px; background: #eee; display: flex; align-items: center; gap: 12px; padding: 0 8px; font-size: 15px; }
.url { flex: 1; margin-left: -2px; }
.url em { font-style: normal; color: #999; }

/* API reference page */
.redoc { flex: 1; min-height: 0; display: grid; grid-template: minmax(0, 1fr) / 260px minmax(0, 1fr) 408px; overflow: hidden; position: relative; font-family: Roboto, "Noto Sans CJK SC", sans-serif; line-height: 22px; }
.side { background: #fafafa; display: flex; flex-direction: column; min-height: 0; }
.rsearch { height: 33px; margin: 0 20px; border-bottom: 1px solid #ddd; display: flex; align-items: center; padding-top: 4px; gap: 6px; font-size: 13px; }
.rsearch svg { width: 14px; height: 14px; }
.rsearch input { flex: 1; border-left: 1px solid #333; height: 18px; }
.rsearch input::placeholder { color: #999; opacity: 1; font-weight: 700; }
.side ul { padding: 5px 20px; }
.side li a { height: 46px; display: flex; align-items: center; gap: 6px; font-size: 14px; }
.side b { width: 34px; height: 13px; margin-bottom: 3px; border-radius: 3px; color: #fff; font-size: 8px; line-height: 13px; text-align: center; font-weight: 700; }
.del { background: #cc3333; }
.put { background: #95507c; }
.post { background: #186faf; }
.get { background: #2f8132; }
.credit { margin-top: auto; height: 33px; border-top: 1px solid #ddd; display: flex; align-items: center; justify-content: center; gap: 4px; font-size: 11px; }
.credit svg { width: 16px; height: 16px; }
.mid { padding: 40px; }
.mid h1 { font: 400 26px/41px Inter, "Noto Sans CJK SC", sans-serif; margin-right: -12px; }
.spec { display: flex; align-items: center; gap: 7px; height: 31px; margin-top: 15px; }
.spec a { border: 1px solid #32329f; color: #32329f; padding: 3px 8px; height: 31px; line-height: 23px; }
.intro { margin-top: 27px; }
.mid h2 { margin-top: 80px; font-size: 22px; line-height: 36px; }
.desc { margin-top: 18px; }
.mid h5 { margin-top: 32px; border-bottom: 1px solid #bbb; font-size: 13px; line-height: 18px; color: #999; }
.mid h5 span { color: #000; font-size: 12px; margin-left: 10px; }
.mid table { width: 100%; border-collapse: separate; border-spacing: 0; font-size: 13px; line-height: 20px; color: #666; }
.mid td { padding: 25px 0 10px; }
.mid .name { width: 133px; font-family: "Liberation Mono", monospace; }
.name i { display: inline-block; width: 11px; height: 7px; margin-right: 11px; border-right: 1px solid #66c; background: linear-gradient(#66c, #66c) 0 3px / 100% 1px no-repeat; }
.mid .type { border-bottom: 1px solid #9fb4be; }
.mid h3 { margin-top: 55px; font-size: 18px; line-height: 26px; }
.resp { width: 100%; height: 40px; margin-top: 21px; padding: 0 16px; justify-content: flex-start; gap: 6px; border-radius: 2px; background: #eef5ef; color: #1d8127; font-size: 13px; }
.resp svg { width: 8px; height: 12px; }

.right { background: #263238; padding: 297px 40px 0; color: #fff; }
.endpoint { width: 100%; height: 47px; background: #11171a; border-radius: 4px 4px 0 0; padding: 0 8px 0 21px; justify-content: flex-start; }
.endpoint b { width: 70px; height: 26px; background: #cc3333; font: 400 13px/26px Inter, sans-serif; margin-right: 10px; }
.endpoint code { font: 13px "Liberation Mono", monospace; color: #ccc; }
.endpoint svg { width: 16px; height: 16px; margin-left: auto; }
.right h3 { margin: 18px 0 16px; font-size: 16px; line-height: 20px; font-weight: 700; }
.rtab { min-width: 100px; height: 33px; border: 1px solid #07090b; border-radius: 4px; background: #fff; color: #333; font-size: 12px; font-weight: 700; margin-bottom: 5px; }
.rtab.ok { color: #1d8127; }
.sample { background: #11171a; padding: 20px; }
.ctype { position: relative; height: 43px; background: #1b2225; padding-left: 12px; font: 13px/43px Inter, sans-serif; color: #ccc; }
.ctype span { position: absolute; top: -10px; line-height: 20px; font-size: 12px; font-weight: 700; color: #aaa; }
.acts { display: flex; justify-content: flex-end; gap: 20px; padding-right: 10px; margin: 17px 0 3px; line-height: 20px; color: #bbb; }
.code { font: 13px/22px "Liberation Mono", monospace; color: #a0aeb8; }
.code.wide { line-height: 23px; }
.code > div { position: relative; white-space: pre; }
.code b { font-weight: 400; color: #fff; }
.code s { text-decoration: none; color: #8be28b; }
.code i { font-style: normal; color: #4a8bb3; }
.code .l1 { padding-left: 28px; }
.code .l2 { padding-left: 56px; }
.code button { position: absolute; left: 10px; color: #fff; }
.thumb { position: absolute; right: 1px; top: 2px; width: 3px; height: 209px; border-radius: 2px; background: #6e7376; }

/* status bar and taskbar */
.status { height: 30px; flex: none; background: #e3e4e6; display: flex; align-items: center; justify-content: space-between; padding: 0 31px 0 1px; }
.devices { display: flex; align-items: center; gap: 5px; }
.devices svg { width: 24px; height: 24px; }
.devices .note { border-left: 2px solid #999; padding-left: 9px; width: 35px; margin-left: 3px; }
.taskbar { height: 72px; flex: none; display: grid; grid-template-columns: 1fr auto 1fr; align-items: center; background: linear-gradient(90deg, #dfe5ee, #e2e1e6 10%, #e0dfe8 22%, #dae5f0 34%, #e2dfe8 50%, #dae4ee 65%, #e0dcea 76%, #e8dfe6 84%, #dfe3ec 90%, #dfe6ee); }
.taskbar .apps { grid-column: 2; display: flex; align-items: center; gap: 9px; }
.taskbar .apps button { width: 57px; height: 57px; border-radius: 6px; position: relative; }
.taskbar .apps button svg { width: 36px; height: 36px; }
.taskbar .current { background: #f3f5fa; box-shadow: 0 0 2px #aab; }
.open::after { content: ""; position: absolute; bottom: 0; left: 24px; width: 9px; height: 5px; border-radius: 3px; background: #83858a; }
.current::after { left: 17px; width: 24px; background: #0a74d0; }
.tsearch { width: 328px; height: 47px; border-radius: 24px; border: 1px solid #c6cad0; border-bottom: 2px solid #b4b9c0; background: #f6f8fb; display: flex; align-items: center; padding: 0 8px 0 16px; gap: 14px; font-size: 20px; }
.tsearch svg { width: 24px; height: 24px; }
.tsearch input { flex: 1; font-size: 21px; }
.tsearch input::placeholder { color: #555; opacity: 1; }
.tsearch .pharaoh { width: 60px; height: 38px; }
.tray { display: flex; align-items: center; justify-content: flex-end; padding-right: 30px; font-size: 17px; }
.tray svg { width: 24px; height: 24px; margin-left: 12px; }
.tray .ime { font-size: 23px; margin: 0 14px 0 22px; }
.tray svg:nth-child(2) { margin-left: 24px; }
.clock { display: flex; flex-direction: column; text-align: right; margin-left: 26px; }

/* floating system monitor */
.widget { position: absolute; right: 2px; top: 272px; width: 48px; height: 269px; border-radius: 14px 0 0 14px; background: rgba(62, 34, 54, .82); color: #fff; display: flex; flex-direction: column; align-items: center; padding-top: 16px; font-size: 15px; line-height: 18px; }
.widget hr { width: 39px; height: 1px; border: 0; background: #5a4560; margin: 16px 0 10px; flex: none; }
.dot { width: 16px; height: 16px; border-radius: 8px; background: #00c064; border: 1px solid #2a6fc0; flex: none; }
.gauge { width: 15px; height: 45px; flex: none; border-radius: 8px; background: linear-gradient(#59374f 20%, #f08a2a 20%, #d3b71c 50%, #5fcf6a 78%, #35b8c4); }
.gauge + hr { margin: 9px 0 12px; }
.rate { height: 39px; }
.rate b { display: block; font-weight: 400; text-align: center; line-height: 18px; }
.rate span { display: flex; align-items: center; gap: 5px; font-size: 14px; line-height: 14px; color: #b3a5b0; }
.rate svg { width: 10px; height: 12px; }
.rate + hr { margin: 8px 0 12px; }
.cam { width: 24px; height: 22px; }
```
